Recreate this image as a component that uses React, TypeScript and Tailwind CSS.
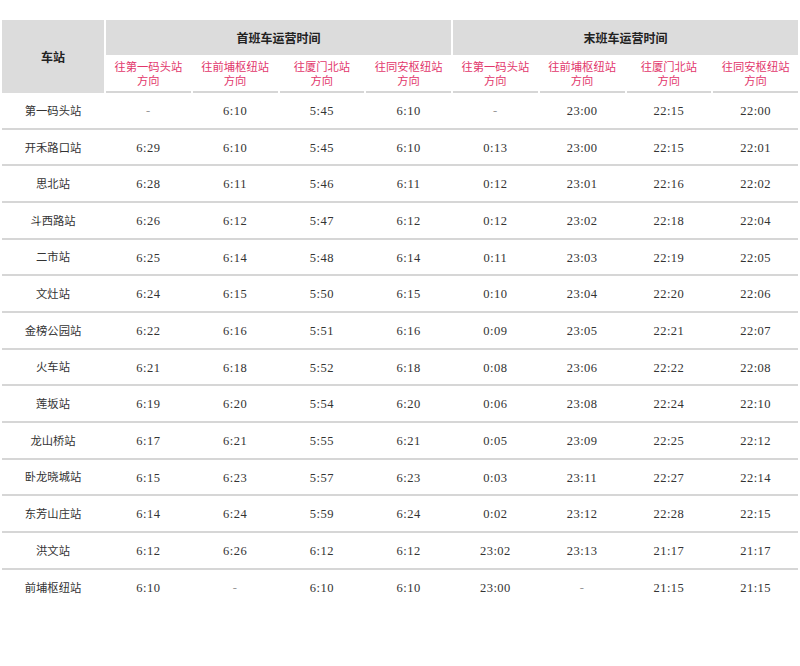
import React from 'react';

const dirs = ['往第一码头站', '往前埔枢纽站', '往厦门北站', '往同安枢纽站'];

const rows: [string, string[]][] = [
  ['第一码头站', ['-', '6:10', '5:45', '6:10', '-', '23:00', '22:15', '22:00']],
  ['开禾路口站', ['6:29', '6:10', '5:45', '6:10', '0:13', '23:00', '22:15', '22:01']],
  ['思北站', ['6:28', '6:11', '5:46', '6:11', '0:12', '23:01', '22:16', '22:02']],
  ['斗西路站', ['6:26', '6:12', '5:47', '6:12', '0:12', '23:02', '22:18', '22:04']],
  ['二市站', ['6:25', '6:14', '5:48', '6:14', '0:11', '23:03', '22:19', '22:05']],
  ['文灶站', ['6:24', '6:15', '5:50', '6:15', '0:10', '23:04', '22:20', '22:06']],
  ['金榜公园站', ['6:22', '6:16', '5:51', '6:16', '0:09', '23:05', '22:21', '22:07']],
  ['火车站', ['6:21', '6:18', '5:52', '6:18', '0:08', '23:06', '22:22', '22:08']],
  ['莲坂站', ['6:19', '6:20', '5:54', '6:20', '0:06', '23:08', '22:24', '22:10']],
  ['龙山桥站', ['6:17', '6:21', '5:55', '6:21', '0:05', '23:09', '22:25', '22:12']],
  ['卧龙晓城站', ['6:15', '6:23', '5:57', '6:23', '0:03', '23:11', '22:27', '22:14']],
  ['东芳山庄站', ['6:14', '6:24', '5:59', '6:24', '0:02', '23:12', '22:28', '22:15']],
  ['洪文站', ['6:12', '6:26', '6:12', '6:12', '23:02', '23:13', '21:17', '21:17']],
  ['前埔枢纽站', ['6:10', '-', '6:10', '6:10', '23:00', '-', '21:15', '21:15']],
];

const cols = 'grid grid-cols-[102px_repeat(8,minmax(0,1fr))] gap-x-[2px]';

export default function App() {
  return (
    <div className="w-[800px] h-[666px] bg-white pt-5 px-[2px] font-['Liberation_Serif','Noto_Sans_CJK_SC',serif] text-[#333]">
      {/* 表头 */}
      <div className={`${cols} gap-y-px`}>
        <div className="row-span-2 bg-[#dcdcdc] flex items-center justify-center font-bold text-[12px] font-['Noto_Sans_CJK_SC',sans-serif] text-[#222]">
          车站
        </div>
        <div className="col-span-4 h-[35px] bg-[#dcdcdc] flex items-center justify-center font-bold text-[12px] font-['Noto_Sans_CJK_SC',sans-serif] text-[#222]">
          首班车运营时间
        </div>
        <div className="col-span-4 h-[35px] bg-[#dcdcdc] flex items-center justify-center font-bold text-[12px] font-['Noto_Sans_CJK_SC',sans-serif] text-[#222]">
          末班车运营时间
        </div>
        {[...dirs, ...dirs].map((d, i) => (
          <div
            key={i}
            className="h-[37px] pt-[2px] border-b-2 border-[#d6d6d6] flex flex-col items-center justify-center text-[11.3px] leading-[13.5px] text-[#e2376c]"
          >
            <span>{d}</span>
            <span>方向</span>
          </div>
        ))}
      </div>

      {/* 数据 */}
      {rows.map(([name, times], i) => (
        <div
          key={name}
          className={`${cols} h-[36.67px] pt-[2px] items-center text-[12.5px] ${i < rows.length - 1 ? 'border-b-2 border-[#d6d6d6]' : ''}`}
        >
          <div className="text-center text-[11.3px]">{name}</div>
          {times.map((t, j) => (
            <div key={j} className={`text-center tracking-[0.5px] ${t === '-' ? 'text-[#999]' : ''}`}>
              {t}
            </div>
          ))}
        </div>
      ))}
    </div>
  );
}
